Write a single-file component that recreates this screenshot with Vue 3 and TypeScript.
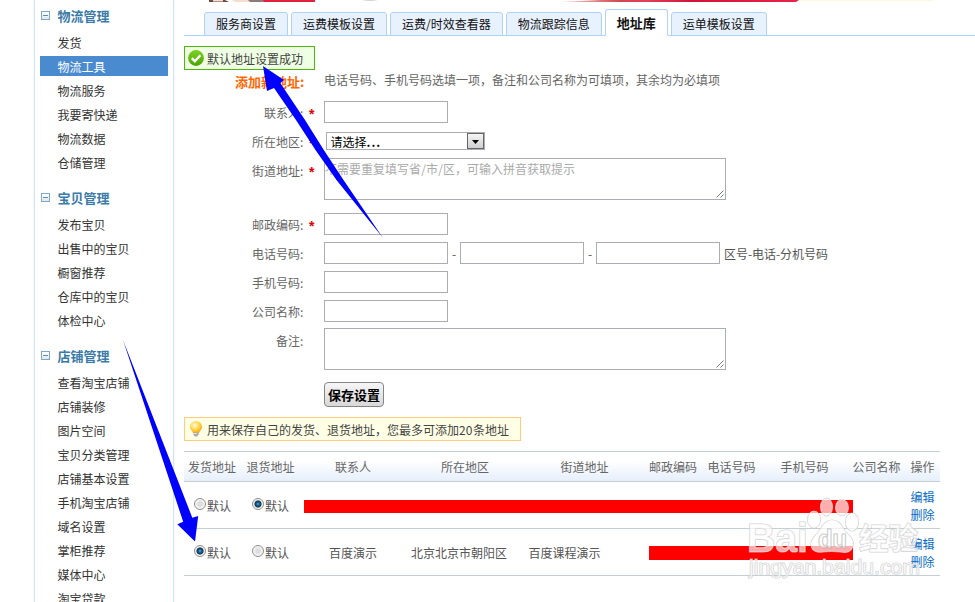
<script setup lang="ts">
interface MenuGroup {
  title: string
  items: string[]
}

interface Tab {
  label: string
  active?: boolean
}

const menu: MenuGroup[] = [
  { title: '物流管理', items: ['发货', '物流工具', '物流服务', '我要寄快递', '物流数据', '仓储管理'] },
  { title: '宝贝管理', items: ['发布宝贝', '出售中的宝贝', '橱窗推荐', '仓库中的宝贝', '体检中心'] },
  {
    title: '店铺管理',
    items: ['查看淘宝店铺', '店铺装修', '图片空间', '宝贝分类管理', '店铺基本设置', '手机淘宝店铺', '域名设置', '掌柜推荐', '媒体中心', '淘宝贷款'],
  },
]
const current = '物流工具'

const tabs: Tab[] = [
  { label: '服务商设置' },
  { label: '运费模板设置' },
  { label: '运费/时效查看器' },
  { label: '物流跟踪信息' },
  { label: '地址库', active: true },
  { label: '运单模板设置' },
]

const columns = ['发货地址', '退货地址', '联系人', '所在地区', '街道地址', '邮政编码', '电话号码', '手机号码', '公司名称', '操作']

const rows = [
  { send: false, back: true, name: '', area: '', street: '' },
  { send: true, back: false, name: '百度演示', area: '北京北京市朝阳区', street: '百度课程演示' },
]
</script>

<template>
  <div class="page">
    <aside class="sidebar">
      <section v-for="g in menu" :key="g.title" class="group">
        <h3><i class="fold"></i><span>{{ g.title }}</span></h3>
        <ul>
          <li v-for="item in g.items" :key="item" :class="{ on: item === current }">{{ item }}</li>
        </ul>
      </section>
    </aside>

    <main class="main">
      <svg class="banner" width="791" height="3" viewBox="184 0 791 3">
        <defs>
          <linearGradient id="ribbon" x1="0" x2="1" y1="0" y2="0">
            <stop offset="0" stop-color="#f6d5d0" />
            <stop offset="0.25" stop-color="#cf4a50" />
            <stop offset="0.36" stop-color="#e0405a" />
            <stop offset="0.55" stop-color="#d2143a" />
            <stop offset="1" stop-color="#ea2348" />
          </linearGradient>
        </defs>
        <path d="M209 0h16l4 2h-20z" fill="#6b4a44" />
        <path d="M213 0h10v1.500h-10zM232 0h24l-3 2h-18z" fill="#f7dcd0" />
        <path d="M248 0h14l2 2h-14z" fill="#8a7a7c" />
        <path d="M262 0h53v2h-51z" fill="#e0223f" />
        <path d="M362 0h16q-8 2-16 0z" fill="#d5d5d5" />
        <path d="M798 0h136v1H798z" fill="#fdf8e0" />
        <path d="M560 2L600 0h199l-3 2z" fill="url(#ribbon)" />
      </svg>

      <nav class="tabs">
        <a v-for="t in tabs" :key="t.label" :class="['tab', { active: t.active }]">{{ t.label }}</a>
      </nav>

      <div class="notice ok">
        <svg width="16" height="16" viewBox="0 0 16 16">
          <defs>
            <linearGradient id="green" x1="0" x2="0" y1="0" y2="1">
              <stop offset="0" stop-color="#7ed321" />
              <stop offset="1" stop-color="#4aa305" />
            </linearGradient>
          </defs>
          <circle cx="8" cy="8" r="7.900" fill="url(#green)" />
          <path d="M3.800 8.200l3 3 5.600-6" fill="none" stroke="#fff" stroke-width="2.400" />
        </svg>
        <span>默认地址设置成功</span>
      </div>

      <form class="form" @submit.prevent>
        <div class="row head">
          <label class="title">添加新地址<b>:</b></label><em></em>
          <p>电话号码、手机号码选填一项，备注和公司名称为可填项，其余均为必填项</p>
        </div>
        <div class="row">
          <label>联系人<b>:</b></label><em>*</em>
          <input type="text" />
        </div>
        <div class="row">
          <label>所在地区<b>:</b></label><em>*</em>
          <div class="select">
            <span>请选择<b class="dots">...</b></span>
            <i><svg width="7" height="4" viewBox="0 0 7 4"><path d="M0 0h7L3.500 4z" /></svg></i>
          </div>
        </div>
        <div class="row street">
          <label>街道地址<b>:</b></label><em>*</em>
          <div class="area">
            不需要重复填写省<s>/</s>市<s>/</s>区，可输入拼音获取提示
            <svg width="8" height="8" viewBox="0 0 8 8"><path d="M.5 7.500l7-7M4.500 7.500l3-3" /></svg>
          </div>
        </div>
        <div class="row">
          <label>邮政编码<b>:</b></label><em>*</em>
          <input type="text" />
        </div>
        <div class="row">
          <label>电话号码<b>:</b></label><em></em>
          <input type="text" /><span class="dash">-</span><input type="text" /><span class="dash">-</span><input type="text" />
          <span class="tip">区号<s>-</s>电话<s>-</s>分机号码</span>
        </div>
        <div class="row">
          <label>手机号码<b>:</b></label><em></em>
          <input type="text" />
        </div>
        <div class="row">
          <label>公司名称<b>:</b></label><em></em>
          <input type="text" />
        </div>
        <div class="row remark">
          <label>备注<b>:</b></label><em></em>
          <div class="area">
            <svg width="8" height="8" viewBox="0 0 8 8"><path d="M.5 7.500l7-7M4.500 7.500l3-3" /></svg>
          </div>
        </div>
        <button type="button" class="save">保存设置</button>
      </form>

      <div class="notice hint">
        <svg width="16" height="18" viewBox="0 0 16 18">
          <defs>
            <radialGradient id="bulb" cx="0.400" cy="0.350" r="0.650">
              <stop offset="0" stop-color="#fffbe0" />
              <stop offset="0.550" stop-color="#ffd84a" />
              <stop offset="1" stop-color="#f6a81c" />
            </radialGradient>
          </defs>
          <path d="M8 1a6 6 0 0 0-6 6c0 2.500 2 3.500 3 6h6c1-2.500 3-3.500 3-6a6 6 0 0 0-6-6z" fill="url(#bulb)" />
          <path d="M5.500 12.500h5v2.500l-1.500 1.500H7L5.500 15z" fill="#a9a9b2" />
          <path d="M6.200 13.500h2.300" stroke="#eee" />
        </svg>
        <span>用来保存自己的发货、退货地址，您最多可添加<u>20</u>条地址</span>
      </div>

      <div class="list">
        <table>
          <colgroup>
            <col v-for="(c, i) in columns" :key="c" :class="'c' + i" />
          </colgroup>
          <thead>
            <tr><th v-for="c in columns" :key="c">{{ c }}</th></tr>
          </thead>
          <tbody>
            <tr v-for="(r, i) in rows" :key="i">
              <td><span class="pick"><i :class="['radio', { on: r.send }]"></i>默认</span></td>
              <td><span class="pick second"><i :class="['radio', { on: r.back }]"></i>默认</span></td>
              <td>{{ r.name }}</td>
              <td class="region">{{ r.area }}</td>
              <td class="addr">{{ r.street }}</td>
              <td></td>
              <td></td>
              <td></td>
              <td></td>
              <td class="ops"><a>编辑</a><a>删除</a></td>
            </tr>
          </tbody>
        </table>
        <div class="mask first"></div>
        <div class="mask last"></div>
      </div>
    </main>

    <svg class="overlay" width="975" height="602" viewBox="0 0 975 602">
      <g fill="#0000fe">
        <path d="M263 66L284 80L280.300 83L305 120L323.800 150L343.500 180L383 238L336.500 180L315.500 150L296 120L274 88L267 91z" />
        <path d="M123 340L192.300 517.700L198.200 516L195 541.500L177.300 524.300L183.200 521.700z" />
      </g>
      <g class="mark">
        <text x="747" y="552" font-size="40" font-weight="bold" textLength="61" lengthAdjust="spacingAndGlyphs">Bai</text>
        <ellipse cx="826.500" cy="507" rx="6" ry="8.800" />
        <ellipse cx="842" cy="507.500" rx="6.500" ry="8" />
        <ellipse cx="814" cy="519.500" rx="6.500" ry="8.500" />
        <ellipse cx="852" cy="522" rx="6.500" ry="9" />
        <path d="M832 520c8 0 10 7 14 12c4 4 8 7 7 13c-1 8-8 8-13 7c-6-1-11-1-17 0c-6 1-12-1-12-8c0-6 5-8 8-13c4-6 6-11 13-11z" />
        <text class="inner" x="818" y="548" font-size="25" font-weight="bold" textLength="29" lengthAdjust="spacingAndGlyphs">du</text>
        <text x="859" y="549" font-size="30" font-weight="bold" textLength="59" lengthAdjust="spacingAndGlyphs">经验</text>
        <text x="749" y="574" font-size="20" textLength="171" lengthAdjust="spacingAndGlyphs">jingyan.baidu.com</text>
      </g>
    </svg>
  </div>
</template>

<style>
body {
  background: #fff;
  overflow: hidden;
}
</style>

<style scoped>
* {
  box-sizing: border-box;
}

.page {
  position: relative;
  display: flex;
  width: 975px;
  height: 602px;
  overflow: hidden;
  font: 12px/20px 'Noto Sans CJK SC', sans-serif;
  color: #555;
  white-space: nowrap;
}

.sidebar {
  flex: none;
  width: 140px;
  height: 620px;
  margin-left: 34px;
  padding: 6px 5px 0;
  border: solid #d3e3f2;
  border-width: 0 1px;
  box-shadow: 0 0 2px #e4edf5;
}

.group {
  margin-bottom: 16px;
}

.group h3 {
  display: flex;
  align-items: center;
  height: 20px;
  margin: 0 0 6px;
  font-size: 13px;
  line-height: 20px;
  color: #3b7ba8;
}

.group h3 span {
  padding-bottom: 1px;
}

.fold {
  display: flex;
  align-items: center;
  justify-content: center;
  width: 9px;
  height: 9px;
  margin: -1px 7.5px 0 1px;
  border: 1px solid #80a9c2;
  background: linear-gradient(#fff, #dfe8ee);
}

.fold::before {
  content: '';
  width: 5px;
  height: 1px;
  background: #5e8fae;
}

.group ul {
  display: flex;
  flex-direction: column;
  gap: 4px;
  margin: 0;
  padding: 0;
  list-style: none;
}

.group li {
  height: 20px;
  padding-left: 17.5px;
  line-height: 21px;
  color: #333;
}

.group li.on {
  background: #4a8bd0;
  color: #fff;
}

.main {
  display: flex;
  flex-direction: column;
  align-items: flex-start;
  width: 791px;
  margin-left: 10px;
}

.banner {
  display: block;
  flex: none;
  margin-bottom: 6px;
}

.tabs {
  display: flex;
  flex: none;
  align-items: flex-end;
  gap: 3px;
  width: 791px;
  height: 27px;
  padding-left: 20px;
  margin-bottom: 10px;
  box-shadow: inset 0 -1px #b0d2fa;
}

.tab {
  height: 24px;
  padding: 0 11px;
  border: 1px solid #b0d2fa;
  border-radius: 3px 3px 0 0;
  background: #e8f2ff;
  line-height: 21px;
  color: #111;
}

.tab.active {
  height: 27px;
  border-bottom-color: #fff;
  background: #fff;
  font-size: 13px;
  font-weight: bold;
  line-height: 26px;
}

.notice {
  display: flex;
  flex: none;
  align-items: center;
  height: 24px;
  padding: 0 11px 0 3px;
  border: 1px solid #4cb80b;
  background: #efffe3;
  color: #444;
}

.notice span {
  padding-top: 2px;
}

.notice svg {
  margin-right: 3px;
}

.form {
  width: 791px;
  height: 347px;
}

.row {
  display: flex;
  align-items: flex-start;
  height: 29px;
}

.row label {
  flex: none;
  width: 122px;
  line-height: 24px;
  text-align: right;
  color: #666;
}

.row b {
  display: inline-block;
  width: 6px;
  font-weight: inherit;
  text-align: left;
}

.row b.dots {
  width: 14px;
  letter-spacing: 1px;
  font-weight: bold;
}

.row em {
  flex: none;
  width: 18px;
  padding-left: 3px;
  font: bold 14px/27px 'Liberation Sans', sans-serif;
  color: #e00000;
}

.row.head {
  height: 31px;
}

.row label.title {
  font-size: 13px;
  font-weight: bold;
  color: #ff6600;
}

.row p {
  margin: 0;
  color: #666;
}

.row input {
  width: 124px;
  height: 22px;
  padding: 0 2px;
  border: 1px solid #abadb3;
  background: #fff;
}

.select {
  display: flex;
  justify-content: space-between;
  width: 159px;
  height: 18px;
  margin: 2px 0 0 2px;
  padding-left: 3.5px;
  border: 1px solid #abadb3;
  line-height: 18px;
  color: #000;
}

.select i {
  display: flex;
  align-items: center;
  justify-content: center;
  width: 17px;
  height: 16px;
  padding-top: 2px;
  border: 1px solid #666;
  background: linear-gradient(#f5f5f5, #cfcfcf);
}

.street {
  height: 54px;
}

.area {
  position: relative;
  width: 402px;
  height: 42px;
  margin-top: -1px;
  border: 1px solid #abadb3;
  color: #aaa;
}

.area svg {
  position: absolute;
  right: 1px;
  bottom: 1px;
  fill: none;
  stroke: #777;
}

s {
  display: inline-block;
  width: 5px;
  text-align: center;
  text-decoration: none;
}

.dash {
  width: 12px;
  line-height: 23px;
  text-align: center;
}

.tip {
  padding-left: 4px;
  line-height: 24px;
}

.tip s {
  width: 4px;
}

.remark {
  height: 53px;
}

.save {
  display: block;
  width: 60px;
  height: 25px;
  margin-left: 140px;
  padding: 0;
  border: 1px solid #858585;
  border-radius: 4px;
  background: linear-gradient(#f6f6f6, #d8d8d8);
  font: bold 13px/23px 'Noto Sans CJK SC', sans-serif;
  color: #000;
}

.hint {
  margin-bottom: 10px;
  border-color: #ffcc7f;
  background: #ffffe5;
}

.hint u {
  display: inline-block;
  width: 14px;
  text-decoration: none;
}

.list {
  position: relative;
}

table {
  width: 756px;
  border-spacing: 0;
  table-layout: fixed;
}

.c0 { width: 56px; }
.c1 { width: 61px; }
.c2 { width: 104px; }
.c3 { width: 120px; }
.c4 { width: 119px; }
.c5 { width: 58px; }
.c6 { width: 59px; }
.c7 { width: 87px; }
.c8 { width: 57px; }
.c9 { width: 35px; }

th {
  height: 31px;
  padding: 1px 0 0;
  border: solid #c3d0d2;
  border-width: 1px 0;
  background: linear-gradient(#fff 30%, #e6effc);
  font-weight: normal;
  line-height: 20px;
  color: #666;
}

td {
  height: 47px;
  padding: 1px 0 0;
  border-bottom: 1px solid #c3d0d2;
  text-align: center;
}

td.region {
  padding-right: 12px;
}

td.addr {
  padding-right: 40px;
}

.pick {
  display: flex;
  align-items: center;
  padding: 1px 0 0 10px;
}

.pick.second {
  padding-left: 12px;
}

.radio {
  width: 12px;
  height: 12px;
  margin: -4px 1px 0 0;
  border: 1px solid #8e8f8f;
  border-radius: 50%;
  background: radial-gradient(circle, #dedede 30%, #f6f6f6 65%);
  box-shadow: inset 0 0 0 1px #f4f4f4;
}

.radio.on {
  background: radial-gradient(circle at 50% 50%, #4fb4e6 0, #1b6796 20%, #12334d 44%, #f4f4f4 58%);
}

td.ops {
  padding-top: 2px;
}

.ops a {
  display: block;
  line-height: 18px;
  color: #0a6cc4;
}

.mask {
  position: absolute;
  background: #f00;
}

.mask.first {
  left: 120px;
  top: 49px;
  width: 549px;
  height: 13px;
}

.mask.last {
  left: 465px;
  top: 95px;
  width: 204px;
  height: 14px;
}

.overlay {
  position: absolute;
  left: 0;
  top: 0;
  pointer-events: none;
}

.mark {
  font-family: 'Liberation Sans', 'Noto Sans CJK SC', sans-serif;
  fill: #fff;
  fill-opacity: 0.68;
  stroke: #c4c4c4;
  stroke-opacity: 0.75;
  stroke-width: 1.2px;
  paint-order: stroke;
}

.mark .inner {
  fill: #fff;
  fill-opacity: 0.4;
  stroke: #aaa;
}
</style>
